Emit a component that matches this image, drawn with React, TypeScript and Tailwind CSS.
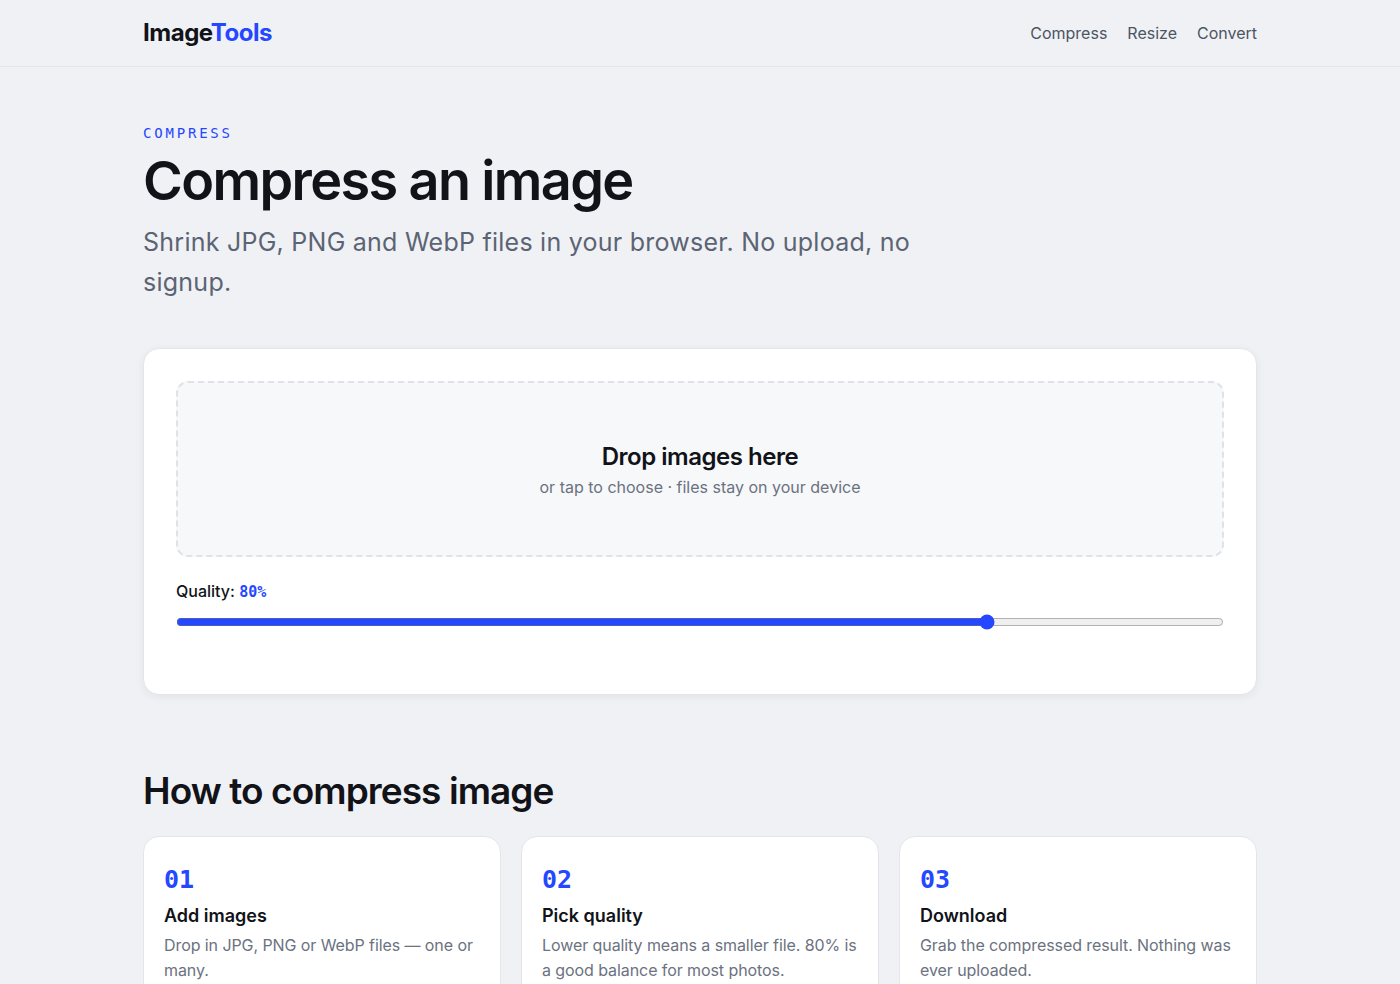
import React, { useState } from 'react';

const steps = [
    { n: '01', title: 'Add images', text: 'Drop in JPG, PNG or WebP files — one or many.' },
    { n: '02', title: 'Pick quality', text: 'Lower quality means a smaller file. 80% is a good balance for most photos.' },
    { n: '03', title: 'Download', text: 'Grab the compressed result. Nothing was ever uploaded.' },
];

export default function App() {
    const [quality, setQuality] = useState(80);

    return (
        <div className="min-h-screen bg-[#f0f1f5] text-[#111318] font-['Inter',sans-serif]">
            <header className="border-b border-[#e3e5ea]">
                <div className="max-w-6xl mx-auto px-[19px] h-[66px] flex items-center justify-between">
                    <a href="#" className="text-[24px] font-bold tracking-[-0.02em]">
                        Image<span className="text-[#2447ff]">Tools</span>
                    </a>
                    <nav className="flex items-center gap-5 text-[16px] text-[#4b5563]">
                        <a href="#">Compress</a>
                        <a href="#">Resize</a>
                        <a href="#">Convert</a>
                    </nav>
                </div>
            </header>

            <main className="max-w-6xl mx-auto px-[19px]">
                <section className="pt-[56px]">
                    <p className="font-['DejaVu_Sans_Mono',monospace] text-[14px] tracking-[0.2em] text-[#2447ff]">
                        COMPRESS
                    </p>
                    <h1 className="mt-[6px] text-[54px] leading-[1.15] font-semibold tracking-[-0.03em]">
                        Compress an image
                    </h1>
                    <p className="mt-[10px] max-w-3xl text-[25px] leading-[40px] tracking-[0.01em] text-[#5b6473]">
                        Shrink JPG, PNG and WebP files in your browser. No upload, no signup.
                    </p>
                </section>

                <section className="mt-[46px] bg-white border border-[#e3e5ea] rounded-2xl shadow-[0_2px_10px_rgba(17,19,24,0.06)] p-8 pb-[64px]">
                    <div className="h-[176px] rounded-xl border-2 border-dashed border-[#dfe2e8] bg-[#f7f8fa] flex flex-col items-center justify-center cursor-pointer">
                        <p className="text-[24px] font-semibold tracking-[-0.02em]">Drop images here</p>
                        <p className="text-[16px] text-[#6b7280]">or tap to choose · files stay on your device</p>
                    </div>

                    <div className="mt-[22px]">
                        <label className="text-[16px] font-medium">
                            Quality:{' '}
                            <span className="font-['DejaVu_Sans_Mono',monospace] font-bold text-[15px] text-[#2447ff]">{quality}%</span>
                        </label>
                        <input
                            type="range"
                            min={10}
                            max={100}
                            value={quality}
                            onChange={(e) => setQuality(Number(e.target.value))}
                            className="mt-[10px] block w-full accent-[#2447ff]"
                        />
                    </div>
                </section>

                <section className="mt-[68px] pb-16">
                    <h2 className="text-[37px] font-semibold tracking-[-0.025em]">How to compress image</h2>
                    <div className="mt-[18px] grid grid-cols-3 gap-5">
                        {steps.map((s) => (
                            <div key={s.n} className="bg-white border border-[#e3e5ea] rounded-2xl pl-5 pr-[16px] pt-[27px] pb-6">
                                <div className="font-['DejaVu_Sans_Mono',monospace] text-[25px] font-bold text-[#2447ff] leading-8">{s.n}</div>
                                <h3 className="mt-[6px] text-[18px] font-semibold">{s.title}</h3>
                                <p className="mt-[4px] text-[16px] leading-[25px] tracking-[-0.005em] text-[#6b7280]">{s.text}</p>
                            </div>
                        ))}
                    </div>
                </section>
            </main>
        </div>
    );
}
